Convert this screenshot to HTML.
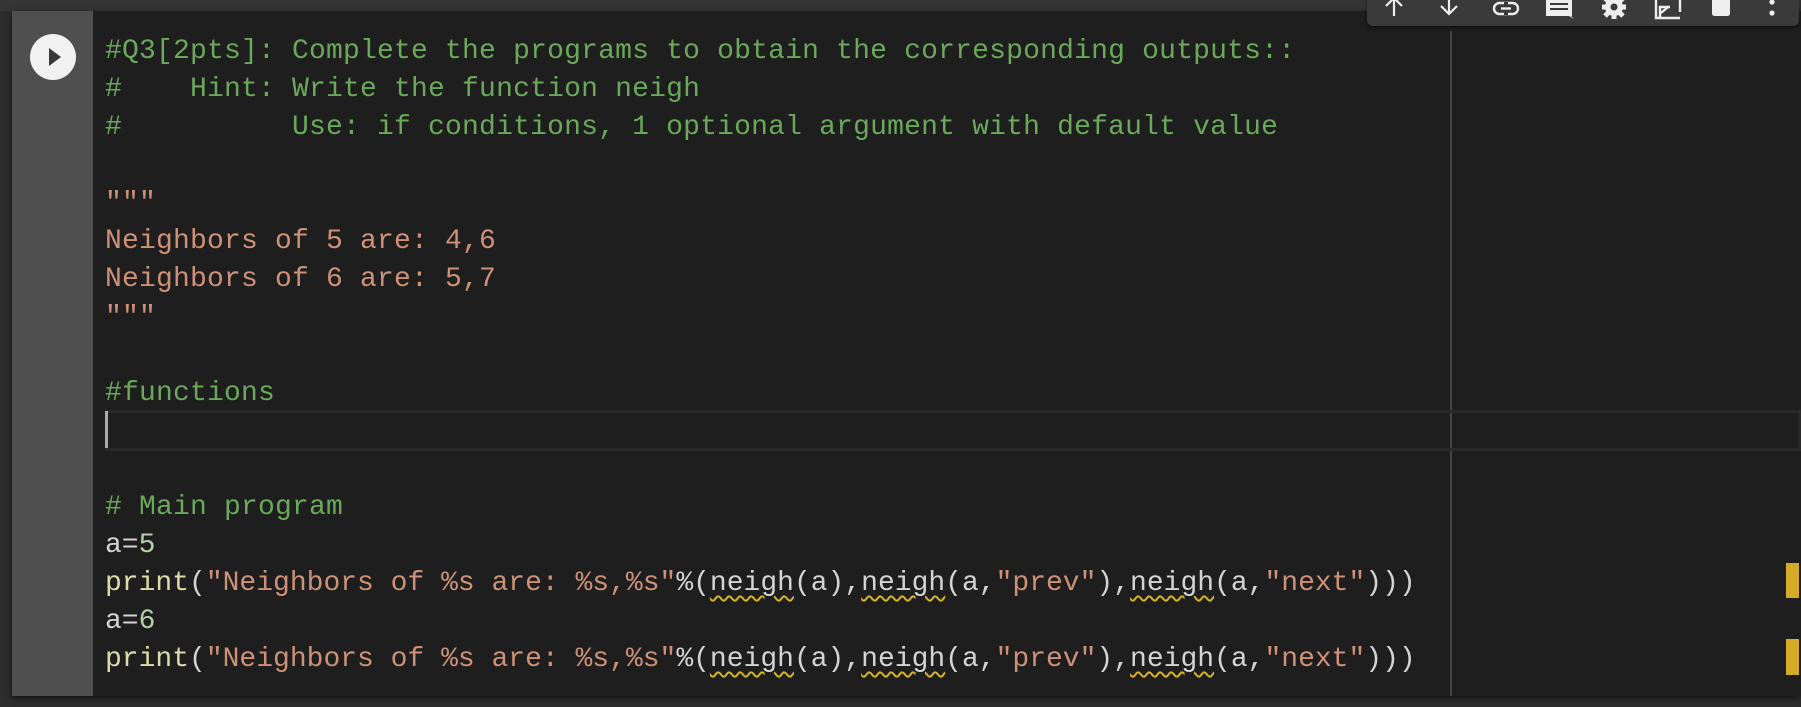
<!DOCTYPE html>
<html><head><meta charset="utf-8"><style>
html,body{margin:0;padding:0;width:1801px;height:707px;overflow:hidden;background:#2d2d2d;}
.top{position:absolute;left:0;top:0;width:1801px;height:11px;background:#353535;}
.cell{position:absolute;left:12px;top:11px;width:1789px;height:685px;background:#1e1e1e;box-shadow:0 2px 6px rgba(0,0,0,.6);}
.gut{position:absolute;left:12px;top:11px;width:81px;height:685px;background:#4f4f4f;}
.play{position:absolute;left:30px;top:34px;width:46px;height:46px;border-radius:50%;background:#f1f1f1;}
.play:after{content:"";position:absolute;left:19px;top:14px;border-left:12px solid #3a3a3a;border-top:9px solid transparent;border-bottom:9px solid transparent;}
.ln{position:absolute;left:105px;font-family:"Liberation Mono",monospace;font-size:28px;letter-spacing:0.2px;white-space:pre;line-height:38px;color:#d4d4d4;}
.k{letter-spacing:0px;}
.c{color:#6aa85a}.s{color:#ce9178}.f{color:#dcdcaa}.n{color:#b5cea8}
.w{text-decoration:underline wavy #d4b22a;text-decoration-thickness:1.5px;text-underline-offset:5px;}
.act{position:absolute;left:105px;top:410px;width:1690px;height:35px;border:3px solid #2a2a2a;}
.cur{position:absolute;left:105px;top:411px;width:3px;height:37px;background:#aaa;}
.vl{position:absolute;left:1450px;top:31px;width:2px;height:665px;background:#444;}
.mk{position:absolute;left:1786px;width:13px;background:#d4aa26;}
.tb{position:absolute;left:1367px;top:-6px;width:432px;height:32px;background:#3a3a3a;border-radius:6px;box-shadow:0 2px 4px rgba(0,0,0,.5);}
.tb svg{position:absolute;top:0;}
</style></head><body>
<div class="top"></div>
<div class="cell"></div>
<div class="gut"></div>
<div class="play"></div>
<div class="vl"></div>
<div class="act"></div>
<div class="cur"></div>
<div class="mk" style="top:563px;height:35px"></div>
<div class="mk" style="top:639px;height:36px"></div>

<div class="ln c" style="top:33px">#Q3[2pts]: Complete the programs to obtain the corresponding outputs::</div>
<div class="ln c" style="top:71px">#    Hint: Write the function neigh</div>
<div class="ln c" style="top:109px">#          Use: if conditions, 1 optional argument with default value</div>
<div class="ln s" style="top:185px">"""</div>
<div class="ln s" style="top:223px">Neighbors of 5 are: 4,6</div>
<div class="ln s" style="top:261px">Neighbors of 6 are: 5,7</div>
<div class="ln s" style="top:299px">"""</div>
<div class="ln c" style="top:375px">#functions</div>
<div class="ln c" style="top:489px"># Main program</div>
<div class="ln k" style="top:527px">a=<span class="n">5</span></div>
<div class="ln k" style="top:565px"><span class="f">print</span>(<span class="s">"Neighbors of %s are: %s,%s"</span>%(<span class="w">neigh</span>(a),<span class="w">neigh</span>(a,<span class="s">"prev"</span>),<span class="w">neigh</span>(a,<span class="s">"next"</span>)))</div>
<div class="ln k" style="top:603px">a=<span class="n">6</span></div>
<div class="ln k" style="top:641px"><span class="f">print</span>(<span class="s">"Neighbors of %s are: %s,%s"</span>%(<span class="w">neigh</span>(a),<span class="w">neigh</span>(a,<span class="s">"prev"</span>),<span class="w">neigh</span>(a,<span class="s">"next"</span>)))</div>

<div class="tb">
<svg style="left:15px" width="24" height="24" viewBox="0 0 24 24"><path d="M12 22V4M4 12l8-8 8 8" stroke="#eee" stroke-width="2.2" fill="none"/></svg>
<svg style="left:70px" width="24" height="24" viewBox="0 0 24 24"><path d="M12 2v18M4 12l8 8 8-8" stroke="#eee" stroke-width="2.2" fill="none"/></svg>
<svg style="left:124px" width="30" height="26" viewBox="0 0 30 26"><rect x="3" y="9" width="24" height="11" rx="5.5" stroke="#eee" stroke-width="2.4" fill="none"/><path d="M10 14.5h10" stroke="#eee" stroke-width="2.4"/><rect x="13" y="8" width="4" height="3" fill="#3a3a3a"/><rect x="13" y="18" width="4" height="3" fill="#3a3a3a"/></svg>
<svg style="left:177px" width="32" height="26" viewBox="0 0 32 26"><path d="M2 4h26v18h-1l3 3-5-3H2z" fill="#eee"/><path d="M6 10h18M6 15h18" stroke="#3a3a3a" stroke-width="2"/></svg>
<svg style="left:231px" width="32" height="26" viewBox="0 0 32 26"><circle cx="16" cy="13" r="9" fill="#eee"/><path d="M16 1v24M4 13h24M7 4l18 18M25 4L7 22" stroke="#eee" stroke-width="5"/><circle cx="16" cy="13" r="3.5" fill="#3a3a3a"/></svg>
<svg style="left:285px" width="32" height="26" viewBox="0 0 32 26"><path d="M4 6v18h24M28 6v12" stroke="#eee" stroke-width="2.4" fill="none"/><path d="M8 23V13h10" stroke="#eee" stroke-width="2.4" fill="none"/><path d="M9 19l7-6" stroke="#eee" stroke-width="2.2"/></svg>
<svg style="left:340px" width="30" height="26" viewBox="0 0 30 26"><rect x="5" y="0" width="18" height="22" rx="2.5" fill="#eee"/></svg>
<svg style="left:395px" width="20" height="26" viewBox="0 0 20 26"><circle cx="10" cy="8" r="2.6" fill="#eee"/><circle cx="10" cy="19" r="2.6" fill="#eee"/></svg>
</div>
</body></html>
